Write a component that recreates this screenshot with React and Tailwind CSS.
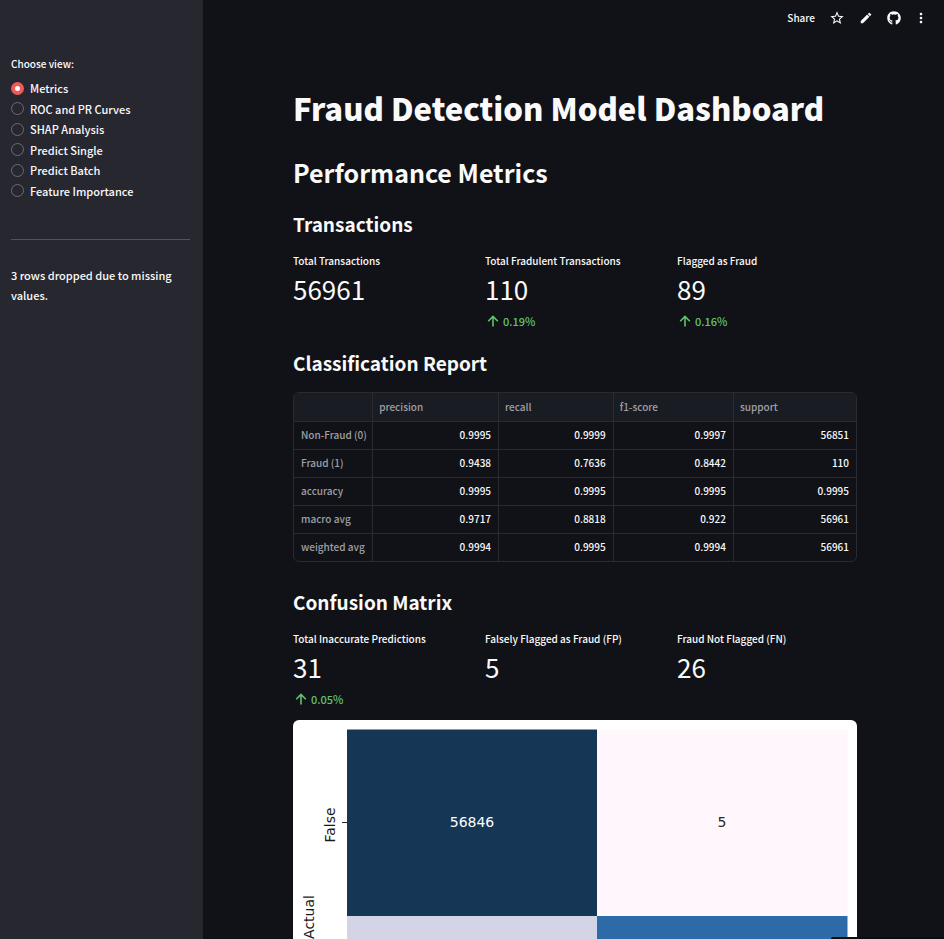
import { useState } from "react";
import { MdStarBorder, MdEdit, MdMoreVert } from "react-icons/md";
import { FaGithub } from "react-icons/fa";

const views = [
  "Metrics",
  "ROC and PR Curves",
  "SHAP Analysis",
  "Predict Single",
  "Predict Batch",
  "Feature Importance",
];

const transactionMetrics = [
  { label: "Total Transactions", value: "56961" },
  { label: "Total Fradulent Transactions", value: "110", delta: "0.19%" },
  { label: "Flagged as Fraud", value: "89", delta: "0.16%" },
];

const confusionMetrics = [
  { label: "Total Inaccurate Predictions", value: "31", delta: "0.05%" },
  { label: "Falsely Flagged as Fraud (FP)", value: "5" },
  { label: "Fraud Not Flagged (FN)", value: "26" },
];

const report = [
  ["Non-Fraud (0)", "0.9995", "0.9999", "0.9997", "56851"],
  ["Fraud (1)", "0.9438", "0.7636", "0.8442", "110"],
  ["accuracy", "0.9995", "0.9995", "0.9995", "0.9995"],
  ["macro avg", "0.9717", "0.8818", "0.922", "56961"],
  ["weighted avg", "0.9994", "0.9995", "0.9994", "56961"],
];

function Sidebar() {
  const [view, setView] = useState("Metrics");
  return (
    <aside className="w-[203px] shrink-0 bg-[#272730] pl-[11px] pr-[13px] pt-14">
      <fieldset>
        <legend className="text-[10px] leading-4 font-medium">Choose view:</legend>
        <div className="mt-[6px] grid h-[123px] auto-rows-fr">
          {views.map((name) => (
            <label key={name} className="flex items-center gap-[6px] text-[11px] leading-5 font-medium">
              <input
                type="radio"
                name="view"
                checked={view === name}
                onChange={() => setView(name)}
                className="size-[13px] shrink-0 appearance-none rounded-full border border-[#6b6c75] checked:border-4 checked:border-[#f05a57] checked:bg-white"
              />
              {name}
            </label>
          ))}
        </div>
      </fieldset>
      <hr className="mt-[38px] border-[#52535b]" />
      <p className="mt-[25px] text-[11px] leading-5 font-medium">3 rows dropped due to missing values.</p>
    </aside>
  );
}

function Toolbar() {
  return (
    <header className="flex h-9 items-center justify-end gap-[14px] pr-[17px]">
      <button className="text-[10px] leading-4 font-medium">Share</button>
      <button aria-label="Favorite"><MdStarBorder size={16} /></button>
      <button aria-label="Edit"><MdEdit size={14} /></button>
      <button aria-label="View source"><FaGithub size={14} /></button>
      <button aria-label="More options" className="flex w-3 justify-center">
        <MdMoreVert size={16} className="shrink-0" />
      </button>
    </header>
  );
}

function UpArrow() {
  return (
    <svg viewBox="0 0 16 16" className="size-4" fill="none" stroke="currentColor" strokeWidth="1.6" aria-hidden="true">
      <path d="M8 13.5V3.5M3.2 8.2L8 3.4l4.8 4.8" />
    </svg>
  );
}

function Metric({ label, value, delta }) {
  return (
    <div>
      <div className="whitespace-nowrap text-[10px] leading-4 font-medium">{label}</div>
      <div className="mt-[2px] text-[26px] leading-9">{value}</div>
      {delta && (
        <div className="mt-[6px] flex items-center gap-[2px] text-[11px] leading-4 font-medium text-[#61c36b]">
          <UpArrow />
          {delta}
        </div>
      )}
    </div>
  );
}

function MetricRow({ items }) {
  return (
    <div className="grid grid-cols-3 gap-3">
      {items.map((item) => (
        <Metric key={item.label} {...item} />
      ))}
    </div>
  );
}

function ReportTable() {
  return (
    <div className="overflow-hidden rounded-md border border-[#292b31]">
      <table className="w-full table-fixed border-collapse text-[10px] leading-4">
        <colgroup>
          <col className="w-[14%]" />
          <col className="w-[22.4%]" />
          <col className="w-[20.4%]" />
          <col className="w-[21.4%]" />
          <col />
        </colgroup>
        <thead className="bg-[#1a1c23] text-left text-[#9fa0a4]">
          <tr className="h-7 border-b border-[#292b31]">
            <td />
            {["precision", "recall", "f1-score", "support"].map((name) => (
              <th key={name} scope="col" className="border-l border-[#292b31] px-[6px] font-medium">
                {name}
              </th>
            ))}
          </tr>
        </thead>
        <tbody>
          {report.map(([name, ...cells]) => (
            <tr key={name} className="h-7 border-b border-[#292b31] last:border-b-0">
              <th scope="row" className="whitespace-nowrap pl-[7px] text-left font-medium text-[#9fa0a4]">
                {name}
              </th>
              {cells.map((cell, i) => (
                <td key={i} className="border-l border-[#292b31] px-[7px] text-right font-medium">
                  {cell}
                </td>
              ))}
            </tr>
          ))}
        </tbody>
      </table>
    </div>
  );
}

function ConfusionChart() {
  return (
    <svg
      viewBox="0 0 564 440"
      role="img"
      aria-label="Confusion matrix heatmap"
      className="block w-full rounded-md bg-white font-['DejaVu_Sans',sans-serif] text-[14px]"
    >
      <rect x="54" y="9.5" width="250" height="186.5" fill="#163655" />
      <rect x="304" y="9.5" width="250.5" height="186.5" fill="#fff7fb" />
      <rect x="54" y="196" width="250" height="186.5" fill="#d3d4e6" />
      <rect x="304" y="196" width="250.5" height="186.5" fill="#2d6aa8" />
      <path d="M49 102.5h5" stroke="#262626" />
      <text x="179" y="107" textAnchor="middle" fill="#ffffff">56846</text>
      <text x="429" y="107" textAnchor="middle" fill="#262626">5</text>
      <text transform="translate(42 105) rotate(-90)" textAnchor="middle" fill="#1a1a1a">False</text>
      <text transform="translate(21 197) rotate(-90)" textAnchor="middle" fill="#1a1a1a">Actual</text>
    </svg>
  );
}

export default function App() {
  return (
    <div className="flex h-screen overflow-hidden bg-[#111217] font-['Noto_Sans_CJK_SC','Open_Sans',sans-serif] text-[#fafafa]">
      <Sidebar />
      <div className="min-w-0 flex-1 overflow-hidden">
        <Toolbar />
        <main className="pt-[51px] pr-[87px] pl-[90px]">
          <h1 className="text-[31px] leading-[42px] font-black">Fraud Detection Model Dashboard</h1>
          <h2 className="mt-[25px] text-[25px] leading-9 font-bold">Performance Metrics</h2>
          <h3 className="mt-5 mb-[15px] text-[19px] leading-7 font-bold">Transactions</h3>
          <MetricRow items={transactionMetrics} />
          <h3 className="mt-5 mb-[15px] text-[19px] leading-7 font-bold">Classification Report</h3>
          <ReportTable />
          <h3 className="mt-[26px] mb-[15px] text-[19px] leading-7 font-bold">Confusion Matrix</h3>
          <MetricRow items={confusionMetrics} />
          <div className="mt-[13px]">
            <ConfusionChart />
          </div>
        </main>
      </div>
      <div className="fixed right-0 bottom-0 h-[2px] w-[113px] rounded-tl-md bg-[#0c0d10]" />
    </div>
  );
}
